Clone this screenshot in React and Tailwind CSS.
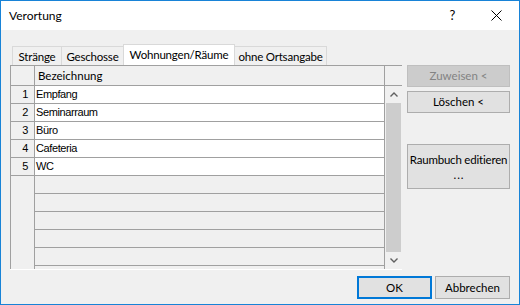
import React from "react";

const rows = ["Empfang", "Seminarraum", "Büro", "Cafeteria", "WC"];

const Chevron = ({ up }) => (
  <svg width="8" height="5" viewBox="0 0 8 5" fill="none">
    <polyline
      points={up ? "0.5,4.5 4,1 7.5,4.5" : "0.5,0.5 4,4 7.5,0.5"}
      stroke="#606060"
      strokeWidth="1.4"
    />
  </svg>
);

const App = () => {
  return (
    <div className="w-[520px] h-[305px] border border-[#1883d7] bg-[#f0f0f0] flex flex-col font-['Lato',sans-serif] text-[11.5px] text-black whitespace-nowrap">
      {/* Title bar */}
      <div className="h-[29px] bg-white flex items-center shrink-0 text-[12px]">
        <span className="pl-[8px] flex-1">Verortung</span>
        <span className="w-[45px] text-center text-[13px] mr-[-1px]">?</span>
        <span className="w-[45px] flex items-center justify-center">
          <svg width="11" height="11" viewBox="0 0 11 11">
            <path d="M0.5 0.5L10.5 10.5M10.5 0.5L0.5 10.5" stroke="#000" strokeWidth="1" />
          </svg>
        </span>
      </div>

      {/* Body */}
      <div className="flex h-[240px] shrink-0">
        {/* Left: tabs + grid */}
        <div className="ml-[9px] pt-[14px] w-[393px] flex flex-col">
          <div className="flex items-end h-[21px] pl-[2px] tracking-[-0.2px]">
            <div className="w-[50px] h-[19px] border border-b-0 border-[#d9d9d9] bg-[#f0f0f0] flex items-center justify-center pt-[1px]">
              Stränge
            </div>
            <div className="w-[63px] -ml-px h-[19px] border border-b-0 border-[#d9d9d9] bg-[#f0f0f0] flex items-center justify-center pt-[1px]">
              Geschosse
            </div>
            <div className="w-[112px] -ml-px h-[21px] border border-b-0 border-[#d9d9d9] bg-white flex items-center justify-center relative z-10">
              Wohnungen/Räume
            </div>
            <div className="w-[93px] -ml-px h-[19px] border border-b-0 border-[#d9d9d9] bg-[#f0f0f0] flex items-center justify-center pt-[1px]">
              ohne Ortsangabe
            </div>
          </div>

          {/* Grid */}
          <div className="w-[392px] flex flex-col border-b border-white">
            <div className="flex h-[21px] border-t border-b border-[#a0a0a0] bg-[#f0f0f0]">
              <div className="w-[25px] border-l border-r border-[#a0a0a0]" />
              <div className="w-[350px] border-r border-[#a0a0a0] pl-[3px] flex items-center">
                Bezeichnung
              </div>
              <div className="w-[17px]" />
            </div>
            <div className="flex h-[183px]">
              <div className="w-[375px] flex flex-col overflow-hidden border-r border-[#a0a0a0]">
                {rows.map((r, i) => (
                  <div key={r} className="flex h-[18px] shrink-0 border-b border-[#a0a0a0] font-['Liberation_Sans',Arial,sans-serif] text-[11px] tracking-[-0.4px]">
                    <div className="w-[25px] border-l border-r border-[#a0a0a0] bg-[#f0f0f0] text-right pr-[6px] leading-[17px]">
                      {i + 1}
                    </div>
                    <div className="flex-1 bg-white pl-[1px] leading-[17px]">{r}</div>
                  </div>
                ))}
                <div className="flex flex-1">
                  <div className="w-[25px] border-l border-r border-[#a0a0a0]" />
                  <div className="flex-1 flex flex-col">
                    {[0, 1, 2, 3, 4].map((k) => (
                      <div key={k} className="h-[18px] shrink-0 border-b border-[#a0a0a0]" />
                    ))}
                  </div>
                </div>
              </div>
              {/* Scrollbar */}
              <div className="w-[17px] flex flex-col bg-[#f0f0f0]">
                <div className="h-[17px] flex items-center justify-center">
                  <Chevron up />
                </div>
                <div className="flex-1 mx-[1px] bg-[#cdcdcd]" />
                <div className="h-[17px] flex items-center justify-center">
                  <Chevron />
                </div>
              </div>
            </div>
          </div>
        </div>

        {/* Right buttons */}
        <div className="ml-[4px] pt-[35px] w-[103px] flex flex-col">
          <div className="h-[22px] border border-[#bfbfbf] bg-[#cccccc] text-[#838383] flex items-center justify-center">
            Zuweisen &lt;
          </div>
          <div className="mt-[4px] h-[22px] border border-[#adadad] bg-[#e1e1e1] flex items-center justify-center">
            Löschen &lt;
          </div>
          <div className="mt-[31px] h-[45px] border border-[#adadad] bg-[#e1e1e1] flex flex-col items-center justify-center leading-[15px] tracking-[-0.2px]">
            <span>Raumbuch editieren</span>
            <span className="tracking-[1px] pl-[1px]">...</span>
          </div>
        </div>
      </div>

      {/* Footer */}
      <div className="flex justify-end gap-[3px] pt-[6px] pr-[9px]">
        <div className="w-[75px] h-[23px] border-2 border-[#0078d7] bg-[#e1e1e1] flex items-center justify-center">
          OK
        </div>
        <div className="w-[75px] h-[23px] border border-[#adadad] bg-[#e1e1e1] flex items-center justify-center">
          Abbrechen
        </div>
      </div>
    </div>
  );
};

export default App;
